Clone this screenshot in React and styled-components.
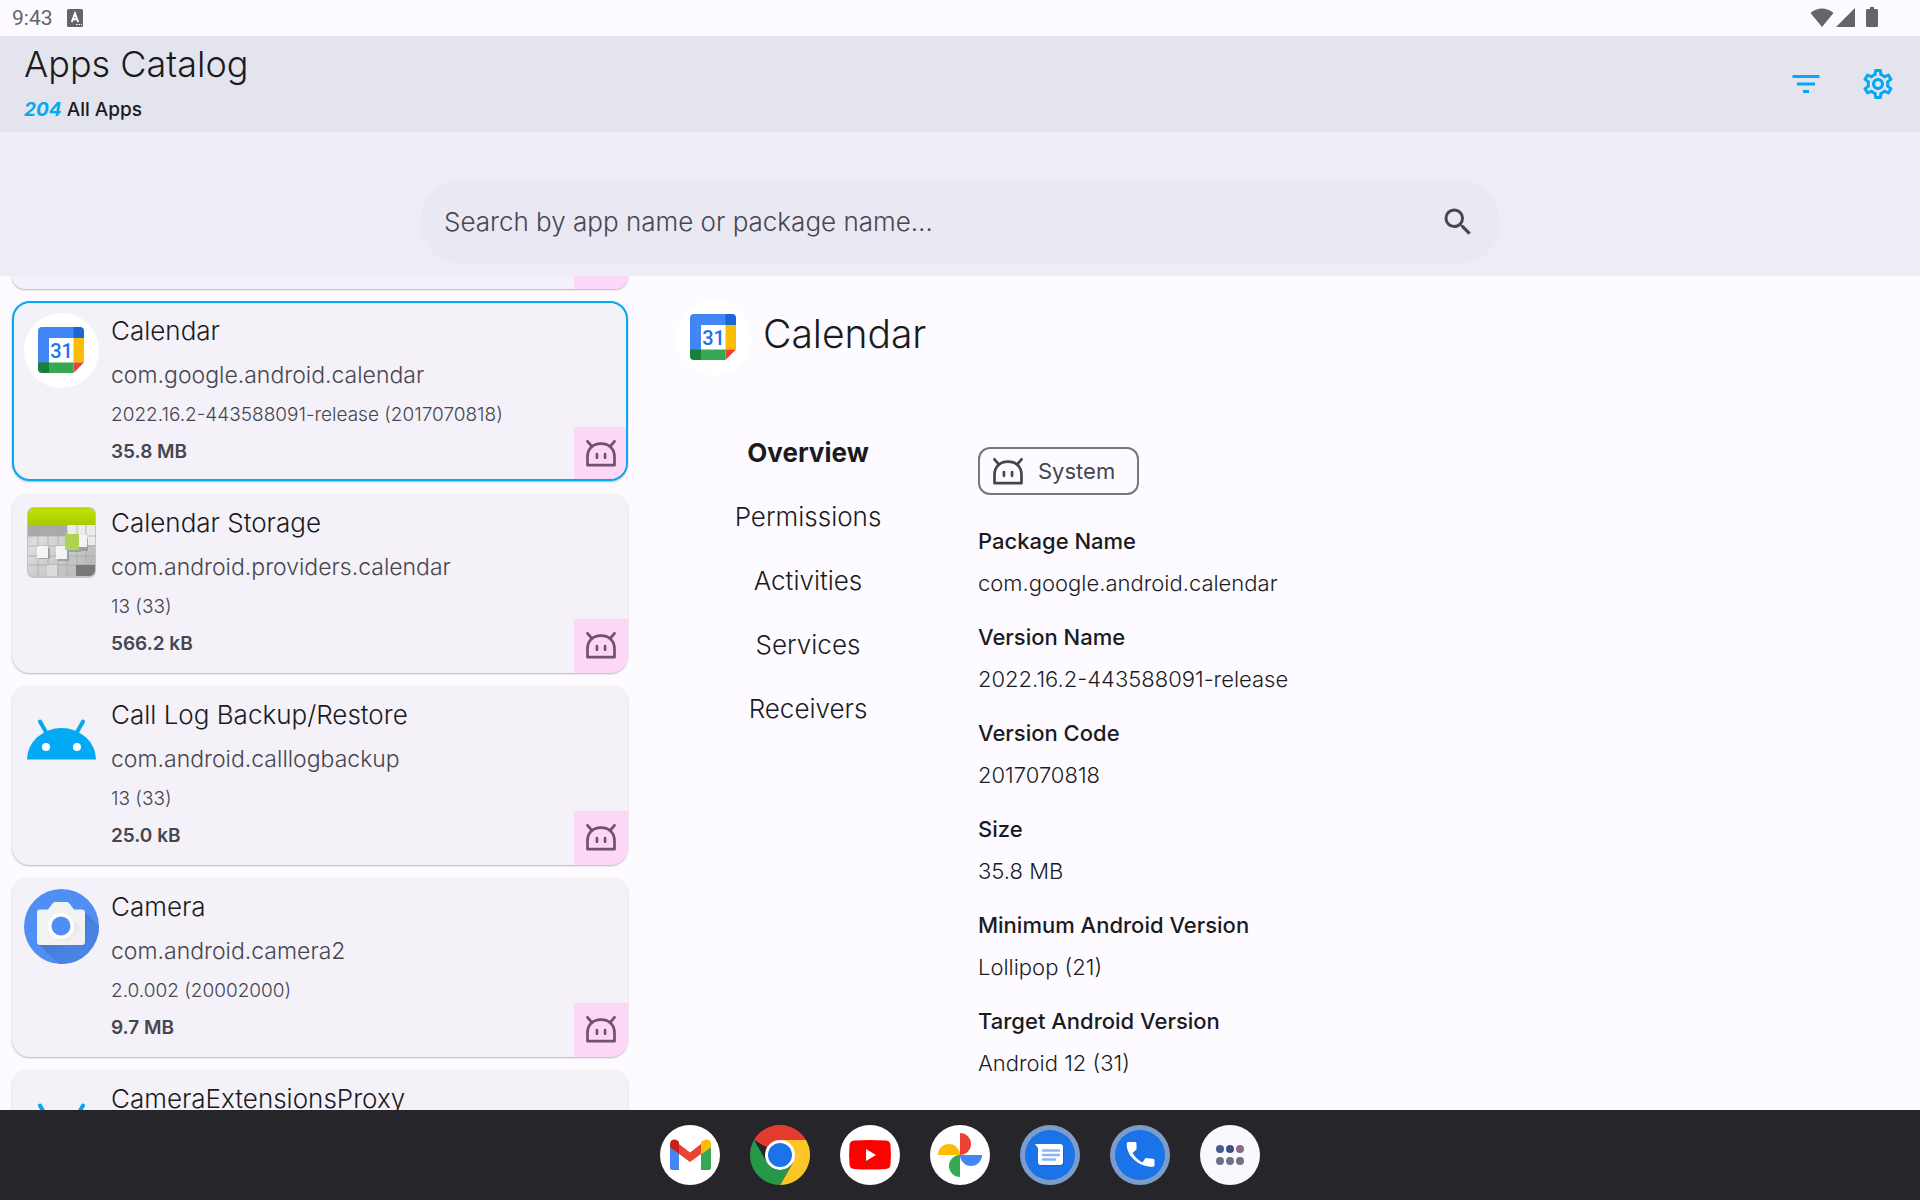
import React, { useState } from "react";
import styled, { createGlobalStyle, css } from "styled-components";

const Global = createGlobalStyle`
  *, *::before, *::after { box-sizing: border-box; }
  body {
    margin: 0;
    background: #fdfbff;
    color: #1b1b1f;
    font-family: Inter, "Open Sans", sans-serif;
  }
  h1, h2, p, ul, dl, dd { margin: 0; padding: 0; }
  button { font: inherit; color: inherit; background: none; border: 0; padding: 0; cursor: pointer; }
  svg { display: block; flex: none; }
`;

const Screen = styled.div`
  height: 100vh;
  display: flex;
  flex-direction: column;
  overflow: hidden;
`;

const StatusBar = styled.div`
  flex: none;
  height: 36px;
  padding: 0 38px 0 12px;
  display: flex;
  align-items: center;
  justify-content: space-between;
  color: #66646a;
  font: 400 21px/36px Roboto, sans-serif;
`;

const StatusGroup = styled.div`
  display: flex;
  align-items: center;
  gap: 14px;
`;

const TopBar = styled.header`
  flex: none;
  height: 96px;
  padding: 6px 24px;
  background: #e4e4ee;
  display: flex;
  align-items: center;
  justify-content: space-between;
`;

const Titles = styled.div`
  display: flex;
  flex-direction: column;
  gap: 8px;
`;

const PageTitle = styled.h1`
  font-weight: 350;
  font-size: 36px;
  line-height: 44px;
`;

const Count = styled.p`
  font-weight: 500;
  font-size: 19px;
  line-height: 32px;
  em { color: #03a9f4; font-weight: 700; }
`;

const Actions = styled.div`
  display: flex;
  gap: 36px;
  color: #03a9f4;
`;

const IconButton = styled.button`
  width: 36px;
  height: 36px;
`;

const SearchStrip = styled.div`
  flex: none;
  height: 144px;
  padding: 48px 24px 12px;
  background: #eeedf7;
  display: flex;
  justify-content: center;
`;

const SearchField = styled.label`
  width: 100%;
  max-width: 1080px;
  height: 84px;
  padding: 0 24px;
  border-radius: 42px;
  background: #eae9f3;
  color: #46464f;
  display: flex;
  align-items: center;
  gap: 24px;
`;

const SearchInput = styled.input`
  flex: 1;
  min-width: 0;
  border: 0;
  outline: 0;
  padding: 0;
  background: transparent;
  font: 350 26px/36px Inter, sans-serif;
  color: #46464f;
  &::placeholder { color: #46464f; opacity: 1; }
`;

const Content = styled.main`
  flex: 1;
  min-height: 0;
  display: grid;
  grid-template-columns: 1fr 2fr;
`;

const AppList = styled.ul`
  min-height: 0;
  overflow: hidden;
  padding: 0 12px;
  list-style: none;
  display: flex;
  flex-direction: column;
  justify-content: flex-start;
  gap: 12px;
`;

const ListItem = styled.li`
  flex: none;
  display: flex;
`;

const Card = styled.button`
  flex: 1;
  height: 180px;
  padding-left: 12px;
  border-radius: 18px;
  overflow: hidden;
  background: #f4f1f9;
  display: flex;
  text-align: left;
  box-shadow: 0 1px 2px rgba(0, 0, 0, 0.28);
  ${(p) => p.$selected && css`
    border: 2px solid #03a9f4;
    padding-left: 10px;
  `}
`;

const CardTail = styled.div`
  flex: 1;
  height: 13px;
  border-radius: 0 0 18px 18px;
  overflow: hidden;
  background: #f4f1f9;
  display: flex;
  justify-content: flex-end;
  box-shadow: 0 1px 2px rgba(0, 0, 0, 0.28);
`;

const TailBadge = styled.span`
  width: 54px;
  background: #fdd7f8;
`;

const CardIcon = styled.span`
  align-self: flex-start;
  margin-top: ${(p) => (p.$selected ? 10 : 12)}px;
`;

const CardText = styled.span`
  flex: 1;
  min-width: 0;
  padding: ${(p) => (p.$selected ? 8 : 10)}px 0 0 12px;
  display: flex;
  flex-direction: column;
  color: #46464f;
`;

const AppName = styled.span`
  font-weight: 350;
  font-size: 26px;
  line-height: 40px;
  color: #1b1b1f;
`;

const PackageLine = styled.span`
  font-weight: 350;
  font-size: 23px;
  line-height: 48px;
`;

const VersionLine = styled.span`
  font-weight: 350;
  font-size: 19px;
  line-height: 32px;
`;

const SizeLine = styled.span`
  font-weight: 600;
  font-size: 19px;
  line-height: 42px;
`;

const Badge = styled.span`
  flex: none;
  align-self: flex-end;
  width: ${(p) => (p.$selected ? 52 : 54)}px;
  height: ${(p) => (p.$selected ? 52 : 54)}px;
  padding-left: ${(p) => (p.$selected ? 9 : 9)}px;
  padding-bottom: ${(p) => (p.$selected ? 0 : 2)}px;
  background: #fdd7f8;
  color: #72516f;
  display: flex;
  align-items: center;
`;

const Detail = styled.section`
  padding: 24px 36px 0;
  min-width: 0;
`;

const DetailHead = styled.div`
  display: flex;
  align-items: flex-start;
  gap: 12px;
`;

const DetailTitle = styled.h2`
  font-weight: 350;
  font-size: 39px;
  line-height: 68px;
`;

const DetailBody = styled.div`
  display: grid;
  grid-template-columns: 264px 1fr;
  column-gap: 38px;
  padding-top: 46px;
`;

const Tabs = styled.nav`
  display: flex;
  flex-direction: column;
`;

const Tab = styled.button`
  height: 64px;
  font-size: 26px;
  line-height: 40px;
  font-weight: ${(p) => (p.$active ? 700 : 350)};
`;

const Overview = styled.div`
  padding-top: 26px;
`;

const Chip = styled.span`
  display: inline-flex;
  align-items: center;
  gap: 12px;
  height: 48px;
  padding: 0 22px 0 10px;
  border: 2px solid #767680;
  border-radius: 12px;
  color: #46464f;
  font-size: 22px;
  line-height: 42px;
`;

const Facts = styled.dl`
  padding-top: 22px;
`;

const FactName = styled.dt`
  font-weight: 500;
  font-size: 22px;
  line-height: 48px;
`;

const FactValue = styled.dd`
  font-weight: 350;
  font-size: 22px;
  line-height: 36px;
  padding-bottom: 12px;
`;

const Dock = styled.footer`
  flex: none;
  height: 90px;
  background: #25252a;
  display: flex;
  align-items: center;
  justify-content: center;
  gap: 30px;
`;

const DockButton = styled.button`
  width: 60px;
  height: 60px;
`;

/* ---------- icons ---------- */

const RobotIcon = ({ size = 36 }) => (
  <svg width={size} height={size} viewBox="0 0 24 24" fill="none" stroke="currentColor" strokeWidth="1.8" strokeLinecap="round" strokeLinejoin="round">
    <path d="M3 20.100V14.500C3 9.200 6.500 5.700 12 5.700s9 3.500 9 8.800v5.600z" />
    <path d="M3 4.200 6 7.800M21 4.200 18 7.800" />
    <path d="M9.300 12.800v2.400M14.700 12.800v2.400" />
  </svg>
);

const CalendarIcon = ({ box = 75 }) => (
  <svg width={box} height={box} viewBox="0 0 75 75">
    <circle cx="37.500" cy="37.500" r="37.500" fill="#fff" />
    <path d="M18 14h32v11H25v25H14V18a4 4 0 0 1 4-4z" fill="#4285f4" />
    <path d="M49.500 14H56a4 4 0 0 1 4 4v7H49.500z" fill="#1967d2" />
    <path d="M49.500 25H60v24.500H49.500z" fill="#fbbc04" />
    <path d="M49.500 49.500H60L49.500 60z" fill="#ea4335" />
    <path d="M25 49.500h24.500V60H25z" fill="#34a853" />
    <path d="M14 49.500h11V60h-7a4 4 0 0 1-4-4z" fill="#188038" />
    <text x="37.500" y="44.500" textAnchor="middle" fontFamily="Roboto, sans-serif" fontWeight="500" fontSize="20" fill="#1a73e8">31</text>
  </svg>
);

const StorageIcon = () => (
  <svg width="75" height="75" viewBox="0 0 75 75">
    <defs>
      <linearGradient id="grid" x1="0" y1="0" x2="1" y2="1">
        <stop offset="0" stopColor="#b4b4b4" />
        <stop offset="0.300" stopColor="#dcdedd" />
        <stop offset="1" stopColor="#b0b3b2" />
      </linearGradient>
      <linearGradient id="lime" x1="0" y1="0" x2="0" y2="1">
        <stop offset="0" stopColor="#b4d600" />
        <stop offset="0.200" stopColor="#bfe000" />
        <stop offset="1" stopColor="#a9c902" />
      </linearGradient>
      <clipPath id="tile"><rect x="4" y="3" width="67" height="68" rx="6" /></clipPath>
    </defs>
    <rect x="3" y="2" width="69" height="71" rx="7" fill="#c4c4c8" />
    <g clipPath="url(#tile)">
      <rect x="3" y="2" width="69" height="70" fill="url(#grid)" />
      <rect x="3" y="2" width="69" height="18" fill="url(#lime)" />
      <rect x="3" y="20" width="40" height="11" fill="#a9abaa" />
      <path d="M43 20h28v20H43z" fill="#ebedec" />
      <path d="M14 20v52M24 20v52M34 20v52M43 20v52M53 20v52M62 20v52M3 31h69M3 41h69M3 51h69M3 60h69" stroke="#a5a8a7" strokeWidth="0.700" />
      <rect x="52" y="60" width="20" height="12" fill="#767978" />
      <rect x="23" y="60" width="10" height="12" fill="#dcdcdc" />
      <path d="M15 43h11v11H15zM34 44h11v12H34zM55 33h9v13h-9zM43 33h14v14H43z" fill="#8f9291" opacity="0.700" />
      <path d="M13 41h11v12H13zM32 41h11v13H32zM54 30h9v12h-9z" fill="#f4f4f4" />
      <path d="M41 29h14v16H41z" fill="#acd353" />
    </g>
  </svg>
);

const AndroidIcon = () => (
  <svg width="75" height="75" viewBox="0 0 75 75">
    <path d="M3 62.500a34.500 31.500 0 0 1 69 0z" fill="#03a9f4" />
    <path d="M16 24.500l6.500 11.500M59 24.500l-6.500 11.500" stroke="#03a9f4" strokeWidth="4" strokeLinecap="round" />
    <circle cx="22" cy="50" r="4" fill="#fff" />
    <circle cx="53" cy="50" r="4" fill="#fff" />
  </svg>
);

const CameraIcon = () => (
  <svg width="75" height="75" viewBox="0 0 75 75">
    <defs>
      <clipPath id="disc"><circle cx="37.500" cy="37.500" r="37.500" /></clipPath>
      <linearGradient id="cast" x1="0" y1="0" x2="0.800" y2="0.800">
        <stop offset="0.300" stopColor="#4479d0" />
        <stop offset="1" stopColor="#4a86e8" />
      </linearGradient>
      <linearGradient id="lens" x1="0" y1="0" x2="1" y2="1">
        <stop offset="0" stopColor="#d4d4d4" />
        <stop offset="1" stopColor="#f2f2f2" />
      </linearGradient>
    </defs>
    <g clipPath="url(#disc)">
      <path d="M0 0h75v75H0z" fill="#4f8ff5" />
      <path d="M60 22l16 16v38H36L14 55z" fill="url(#cast)" />
    </g>
    <path d="M16 20.500h8l5-6.500a3 3 0 0 1 2-1h12a3 3 0 0 1 2 1l5 6.500h8a3 3 0 0 1 3 3V53a3 3 0 0 1-3 3H16a3 3 0 0 1-3-3V23.500a3 3 0 0 1 3-3z" fill="#f2f2f2" />
    <path d="M47 29l11 11-13 14-16-7z" fill="url(#lens)" opacity="0.600" />
    <circle cx="37" cy="37" r="13" fill="#fff" />
    <circle cx="37" cy="37" r="9.500" fill="#4f8ff5" />
  </svg>
);

const KeyboardIcon = () => (
  <svg width="17" height="18" viewBox="0 0 17 18">
    <rect width="16" height="18" rx="1.500" fill="#66646a" />
    <path d="M4.800 13 8 4.500 11.200 13M6 10.200h4" fill="none" stroke="#fff" strokeWidth="2" />
    <path d="M9 15.500h6" stroke="#fff" strokeWidth="1.200" strokeDasharray="1.500 1" />
  </svg>
);

const StatusIcons = () => (
  <svg width="72" height="24" viewBox="0 0 72 24" fill="#66646a">
    <path d="M0.500 7C7 1 17 1 23.500 7L12 21z" />
    <path d="M26 21 45 2v19z" />
    <path d="M56 4.500A1.500 1.500 0 0 1 57.500 3H60V1h4v2h2.500A1.500 1.500 0 0 1 68 4.500v15a1.500 1.500 0 0 1-1.500 1.500h-9A1.500 1.500 0 0 1 56 19.500z" />
  </svg>
);

const FilterIcon = () => (
  <svg width="36" height="36" viewBox="0 0 24 24" fill="currentColor">
    <path d="M10 18h4v-2h-4zM3 6v2h18V6zm3 7h12v-2H6z" />
  </svg>
);

const GearIcon = () => (
  <svg width="36" height="36" viewBox="0 0 24 24" fill="currentColor">
    <path d="M19.430 12.980c.04-.32.07-.64.07-.98s-.03-.66-.07-.98l2.110-1.650c.19-.15.24-.42.12-.64l-2-3.460c-.09-.16-.26-.25-.44-.25-.06 0-.12.010-.17.030l-2.490 1c-.52-.4-1.080-.73-1.690-.98l-.38-2.650C14.460 2.180 14.250 2 14 2h-4c-.25 0-.46.18-.49.42l-.38 2.650c-.61.25-1.170.59-1.690.98l-2.490-1c-.06-.02-.12-.03-.18-.03-.17 0-.34.09-.43.25l-2 3.460c-.13.22-.07.49.12.64l2.110 1.650c-.04.32-.07.65-.07.98s.03.66.07.98l-2.110 1.650c-.19.15-.24.42-.12.64l2 3.460c.09.16.26.25.44.25.06 0 .12-.01.17-.03l2.490-1c.52.4 1.080.73 1.690.98l.38 2.650c.03.24.24.42.49.42h4c.25 0 .46-.18.49-.42l.38-2.650c.61-.25 1.170-.59 1.690-.98l2.490 1c.06.02.12.03.18.03.17 0 .34-.09.43-.25l2-3.460c.12-.22.07-.49-.12-.64zm-1.980-1.710c.04.31.05.52.05.73s-.02.43-.05.73l-.14 1.130.89.7 1.080.84-.7 1.210-1.270-.51-1.040-.42-.9.68c-.43.32-.84.56-1.250.73l-1.060.43-.16 1.130-.2 1.350h-1.400l-.19-1.350-.16-1.130-1.060-.43c-.43-.18-.83-.41-1.230-.71l-.91-.7-1.060.43-1.270.51-.7-1.210 1.080-.84.89-.7-.14-1.130c-.03-.31-.05-.54-.05-.74s.02-.43.05-.73l.14-1.130-.89-.7-1.080-.84.7-1.210 1.270.51 1.040.42.9-.68c.43-.32.84-.56 1.250-.73l1.060-.43.16-1.130.2-1.350h1.390l.19 1.350.16 1.130 1.060.43c.43.18.83.41 1.230.71l.91.7 1.060-.43 1.270-.51.7 1.210-1.070.85-.89.7zM12 8c-2.210 0-4 1.790-4 4s1.790 4 4 4 4-1.790 4-4-1.790-4-4-4m0 6c-1.100 0-2-.9-2-2s.9-2 2-2 2 .9 2 2-.9 2-2 2" />
  </svg>
);

const SearchIcon = () => (
  <svg width="36" height="36" viewBox="0 0 24 24" fill="currentColor">
    <path d="M15.500 14h-.79l-.28-.27A6.470 6.470 0 0 0 16 9.500 6.500 6.500 0 1 0 9.500 16c1.610 0 3.090-.59 4.230-1.570l.27.280v.79l5 4.990L20.490 19zm-6 0C7.010 14 5 11.990 5 9.500S7.010 5 9.500 5 14 7.010 14 9.500 11.990 14 9.500 14" />
  </svg>
);

const GmailIcon = () => (
  <svg width="60" height="60" viewBox="0 0 60 60">
    <circle cx="30" cy="30" r="30" fill="#fff" />
    <path d="M10 22l9 7v16h-7a2 2 0 0 1-2-2z" fill="#4285f4" />
    <path d="M51 22l-10 7v16h8a2 2 0 0 0 2-2z" fill="#34a853" />
    <path d="M19 19l11 8.500L41 19v10l-11 8-11-8z" fill="#ea4335" />
    <path d="M10 19c0-5 5-5.500 7.500-3.500L19 17v12l-9-6.500z" fill="#c5221f" />
    <path d="M51 19c0-5-5-5.500-7.500-3.500L41 17v12l10-7z" fill="#fbbc04" />
  </svg>
);

const ChromeIcon = () => (
  <svg width="60" height="60" viewBox="0 0 60 60">
    <path d="M30 30 4 15A30 30 0 0 1 56 15z" fill="#e33b2e" />
    <path d="M30 15h26A30 30 0 0 1 30 60L43 37.500z" fill="#fcc629" />
    <path d="M4 15l13 22.500A15 15 0 0 0 43 37.500L30 60A30 30 0 0 1 4 15z" fill="#279847" />
    <circle cx="30" cy="30" r="15" fill="#fff" />
    <circle cx="30" cy="30" r="12" fill="#1a73e8" />
  </svg>
);

const YouTubeIcon = () => (
  <svg width="60" height="60" viewBox="0 0 60 60">
    <circle cx="30" cy="30" r="30" fill="#fff" />
    <path d="M14 15.600Q30 14.600 46 15.600Q50 16 50.500 20Q51.400 30 50.500 39.500Q50 43.500 46 44Q30 45 14 44Q10 43.500 9.500 39.500Q8.600 30 9.500 20Q10 16 14 15.600z" fill="red" />
    <path d="M26 24v12l10-6z" fill="#fff" />
  </svg>
);

const PhotosIcon = () => (
  <svg width="60" height="60" viewBox="0 0 60 60">
    <circle cx="30" cy="30" r="30" fill="#fff" />
    <path d="M30 8a11 11 0 0 1 0 22z" fill="#ea4335" />
    <path d="M30 30h22a11 11 0 0 1-22 0z" fill="#4285f4" />
    <path d="M30 30v22a11 11 0 0 1 0-22z" fill="#34a853" />
    <path d="M30 30H8a11 11 0 0 1 22 0z" fill="#fbbc04" />
  </svg>
);

const MessagesIcon = () => (
  <svg width="60" height="60" viewBox="0 0 60 60">
    <circle cx="30" cy="30" r="30" fill="#7c9cca" />
    <circle cx="30" cy="30" r="25" fill="#1a73e8" />
    <path d="M19 25v13a3 3 0 0 0 3 3h19a3 3 0 0 0 3-3V25z" fill="#1558b0" opacity="0.600" />
    <path d="M15 19h25a3 3 0 0 1 3 3v15a3 3 0 0 1-3 3H21a3 3 0 0 1-3-3V23z" fill="#fff" />
    <path d="M23 25.500h16M23 30h16M23 34.500h12" stroke="#8ab4f8" strokeWidth="2.400" strokeLinecap="round" />
  </svg>
);

const PhoneIcon = () => (
  <svg width="60" height="60" viewBox="0 0 60 60">
    <circle cx="30" cy="30" r="30" fill="#7c9cca" />
    <circle cx="30" cy="30" r="25" fill="#1a73e8" />
    <path d="M18 17h7a1.500 1.500 0 0 1 1.500 1.500v6l-4 3.500a25 25 0 0 0 10 9.500l3-4.500 7.500.8a1.500 1.500 0 0 1 1.500 1.500V40a1.500 1.500 0 0 1-1.500 1.800C29 42 16 31 16.800 18.500A1.500 1.500 0 0 1 18 17z" fill="#fff" />
  </svg>
);

const AllAppsIcon = () => (
  <svg width="60" height="60" viewBox="0 0 60 60">
    <circle cx="30" cy="30" r="30" fill="#faf8fd" />
    <circle cx="20" cy="24" r="4" fill="#475d92" />
    <circle cx="30" cy="24" r="4" fill="#3b4f86" />
    <circle cx="40" cy="24" r="4" fill="#8c6a8c" />
    <circle cx="20" cy="36" r="4" fill="#6d7182" />
    <circle cx="30" cy="36" r="4" fill="#6d7182" />
    <circle cx="40" cy="36" r="4" fill="#6d7182" />
  </svg>
);

/* ---------- data ---------- */

const apps = [
  { name: "Calendar", pkg: "com.google.android.calendar", version: "2022.16.2-443588091-release (2017070818)", size: "35.8 MB", Icon: CalendarIcon },
  { name: "Calendar Storage", pkg: "com.android.providers.calendar", version: "13 (33)", size: "566.2 kB", Icon: StorageIcon },
  { name: "Call Log Backup/Restore", pkg: "com.android.calllogbackup", version: "13 (33)", size: "25.0 kB", Icon: AndroidIcon },
  { name: "Camera", pkg: "com.android.camera2", version: "2.0.002 (20002000)", size: "9.7 MB", Icon: CameraIcon },
  { name: "CameraExtensionsProxy", Icon: AndroidIcon },
];

const facts = [
  ["Package Name", "com.google.android.calendar"],
  ["Version Name", "2022.16.2-443588091-release"],
  ["Version Code", "2017070818"],
  ["Size", "35.8 MB"],
  ["Minimum Android Version", "Lollipop (21)"],
  ["Target Android Version", "Android 12 (31)"],
];

const tabs = ["Overview", "Permissions", "Activities", "Services", "Receivers"];

const dock = [
  ["Gmail", GmailIcon],
  ["Chrome", ChromeIcon],
  ["YouTube", YouTubeIcon],
  ["Photos", PhotosIcon],
  ["Messages", MessagesIcon],
  ["Phone", PhoneIcon],
  ["All apps", AllAppsIcon],
];

function AppCard({ app, selected }) {
  const { name, pkg, version, size, Icon } = app;
  return (
    <ListItem>
      <Card type="button" $selected={selected}>
        <CardIcon $selected={selected}><Icon /></CardIcon>
        <CardText $selected={selected}>
          <AppName>{name}</AppName>
          {pkg && <PackageLine>{pkg}</PackageLine>}
          {version && <VersionLine>{version}</VersionLine>}
          {size && <SizeLine>{size}</SizeLine>}
        </CardText>
        <Badge $selected={selected}><RobotIcon /></Badge>
      </Card>
    </ListItem>
  );
}

export default function App() {
  const [tab, setTab] = useState("Overview");
  return (
    <>
      <Global />
      <Screen>
        <StatusBar>
          <StatusGroup>
            <span>9:43</span>
            <KeyboardIcon />
          </StatusGroup>
          <StatusIcons />
        </StatusBar>
        <TopBar>
          <Titles>
            <PageTitle>Apps Catalog</PageTitle>
            <Count><em>204</em> All Apps</Count>
          </Titles>
          <Actions>
            <IconButton type="button" aria-label="Filter"><FilterIcon /></IconButton>
            <IconButton type="button" aria-label="Settings"><GearIcon /></IconButton>
          </Actions>
        </TopBar>
        <SearchStrip>
          <SearchField>
            <SearchInput type="text" aria-label="Search apps" placeholder="Search by app name or package name…" />
            <SearchIcon />
          </SearchField>
        </SearchStrip>
        <Content>
          <AppList>
            <ListItem aria-hidden="true">
              <CardTail><TailBadge /></CardTail>
            </ListItem>
            {apps.map((app, i) => (
              <AppCard key={app.name} app={app} selected={i === 0} />
            ))}
          </AppList>
          <Detail>
            <DetailHead>
              <CalendarIcon />
              <DetailTitle>Calendar</DetailTitle>
            </DetailHead>
            <DetailBody>
              <Tabs>
                {tabs.map((t) => (
                  <Tab key={t} type="button" $active={t === tab} onClick={() => setTab(t)}>{t}</Tab>
                ))}
              </Tabs>
              <Overview>
                <Chip><RobotIcon />System</Chip>
                <Facts>
                  {facts.map(([k, v]) => (
                    <React.Fragment key={k}>
                      <FactName>{k}</FactName>
                      <FactValue>{v}</FactValue>
                    </React.Fragment>
                  ))}
                </Facts>
              </Overview>
            </DetailBody>
          </Detail>
        </Content>
        <Dock>
          {dock.map(([label, Icon]) => (
            <DockButton key={label} type="button" aria-label={label}><Icon /></DockButton>
          ))}
        </Dock>
      </Screen>
    </>
  );
}
